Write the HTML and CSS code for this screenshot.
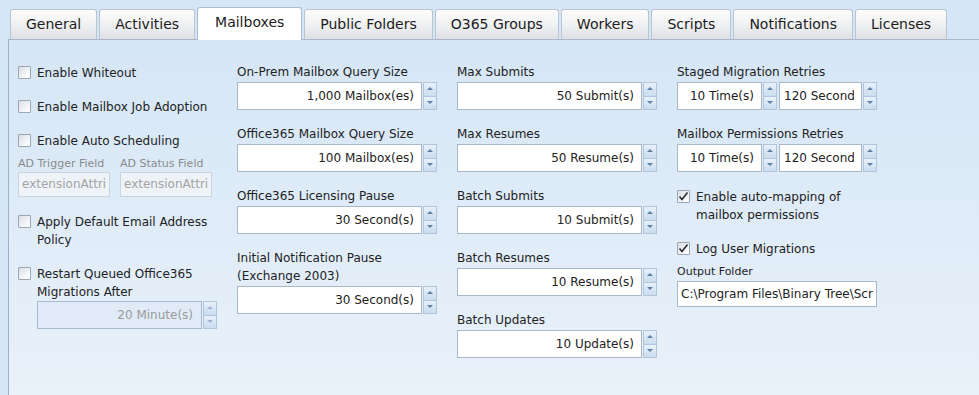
FILE: index.html
```html
<!DOCTYPE html>
<html lang="en">
<head>
  <meta charset="UTF-8">
  <title>Mailboxes Settings</title>
  <link rel="stylesheet" href="styles.css">
</head>
<body>
  <div class="tabs">
    <div class="tab">General</div>
    <div class="tab">Activities</div>
    <div class="tab active">Mailboxes</div>
    <div class="tab">Public Folders</div>
    <div class="tab">O365 Groups</div>
    <div class="tab">Workers</div>
    <div class="tab">Scripts</div>
    <div class="tab">Notifications</div>
    <div class="tab">Licenses</div>
  </div>

  <div class="panel">
    <!-- column 1 -->
    <div class="col">
      <div class="check"><span class="box"></span><div class="check-text">Enable Whiteout</div></div>
      <div class="check"><span class="box"></span><div class="check-text">Enable Mailbox Job Adoption</div></div>
      <div class="check tight"><span class="box"></span><div class="check-text">Enable Auto Scheduling</div></div>
      <div class="ad-fields">
        <div class="ad-field">
          <div class="small-label">AD Trigger Field</div>
          <div class="text-input disabled"><div class="clip">extensionAttribute1</div></div>
        </div>
        <div class="ad-field">
          <div class="small-label">AD Status Field</div>
          <div class="text-input disabled"><div class="clip">extensionAttribute2</div></div>
        </div>
      </div>
      <div class="check"><span class="box"></span><div class="check-text">Apply Default Email Address Policy</div></div>
      <div class="check"><span class="box"></span>
        <div class="check-text">Restart Queued Office365 Migrations After
          <div class="spin disabled">
            <div class="spin-val"><div class="clip">20 Minute(s)</div></div>
            <div class="spin-btns"><span class="up"></span><span class="down"></span></div>
          </div>
        </div>
      </div>
    </div>

    <!-- column 2 -->
    <div class="col">
      <div class="field">
        <div class="label">On-Prem Mailbox Query Size</div>
        <div class="spin"><div class="spin-val"><div class="clip">1,000 Mailbox(es)</div></div><div class="spin-btns"><span class="up"></span><span class="down"></span></div></div>
      </div>
      <div class="field">
        <div class="label">Office365 Mailbox Query Size</div>
        <div class="spin"><div class="spin-val"><div class="clip">100 Mailbox(es)</div></div><div class="spin-btns"><span class="up"></span><span class="down"></span></div></div>
      </div>
      <div class="field">
        <div class="label">Office365 Licensing Pause</div>
        <div class="spin"><div class="spin-val"><div class="clip">30 Second(s)</div></div><div class="spin-btns"><span class="up"></span><span class="down"></span></div></div>
      </div>
      <div class="field">
        <div class="label">Initial Notification Pause (Exchange 2003)</div>
        <div class="spin"><div class="spin-val"><div class="clip">30 Second(s)</div></div><div class="spin-btns"><span class="up"></span><span class="down"></span></div></div>
      </div>
    </div>

    <!-- column 3 -->
    <div class="col">
      <div class="field">
        <div class="label">Max Submits</div>
        <div class="spin"><div class="spin-val"><div class="clip">50 Submit(s)</div></div><div class="spin-btns"><span class="up"></span><span class="down"></span></div></div>
      </div>
      <div class="field">
        <div class="label">Max Resumes</div>
        <div class="spin"><div class="spin-val"><div class="clip">50 Resume(s)</div></div><div class="spin-btns"><span class="up"></span><span class="down"></span></div></div>
      </div>
      <div class="field">
        <div class="label">Batch Submits</div>
        <div class="spin"><div class="spin-val"><div class="clip">10 Submit(s)</div></div><div class="spin-btns"><span class="up"></span><span class="down"></span></div></div>
      </div>
      <div class="field">
        <div class="label">Batch Resumes</div>
        <div class="spin"><div class="spin-val"><div class="clip">10 Resume(s)</div></div><div class="spin-btns"><span class="up"></span><span class="down"></span></div></div>
      </div>
      <div class="field">
        <div class="label">Batch Updates</div>
        <div class="spin"><div class="spin-val"><div class="clip">10 Update(s)</div></div><div class="spin-btns"><span class="up"></span><span class="down"></span></div></div>
      </div>
    </div>

    <!-- column 4 -->
    <div class="col">
      <div class="field">
        <div class="label">Staged Migration Retries</div>
        <div class="spin-pair">
          <div class="spin short"><div class="spin-val"><div class="clip">10 Time(s)</div></div><div class="spin-btns"><span class="up"></span><span class="down"></span></div></div>
          <div class="spin short"><div class="spin-val"><div class="clip">120 Second(s)</div></div><div class="spin-btns"><span class="up"></span><span class="down"></span></div></div>
        </div>
      </div>
      <div class="field gap-more">
        <div class="label">Mailbox Permissions Retries</div>
        <div class="spin-pair">
          <div class="spin short"><div class="spin-val"><div class="clip">10 Time(s)</div></div><div class="spin-btns"><span class="up"></span><span class="down"></span></div></div>
          <div class="spin short"><div class="spin-val"><div class="clip">120 Second(s)</div></div><div class="spin-btns"><span class="up"></span><span class="down"></span></div></div>
        </div>
      </div>
      <div class="check"><span class="box checked"><svg viewBox="0 0 13 13" width="13" height="13"><polyline points="2.5,6.5 5,9.5 10.5,2.5" fill="none" stroke="#2a2a2a" stroke-width="1.6"/></svg></span><div class="check-text">Enable auto-mapping of mailbox permissions</div></div>
      <div class="check tight"><span class="box checked"><svg viewBox="0 0 13 13" width="13" height="13"><polyline points="2.5,6.5 5,9.5 10.5,2.5" fill="none" stroke="#2a2a2a" stroke-width="1.6"/></svg></span><div class="check-text">Log User Migrations</div></div>
      <div class="small-label folder-label">Output Folder</div>
      <div class="text-input folder"><div class="clip">C:\Program Files\Binary Tree\Scripts</div></div>
    </div>
  </div>
</body>
</html>
```

FILE: styles.css
```css
html, body {
  margin: 0;
  height: 395px;
  overflow: hidden;
}

body {
  background: #d5e6f6;
  font-family: 'DejaVu Sans', Verdana, sans-serif;
  font-size: 12px;
  color: #222;
}

.tabs {
  display: flex;
  align-items: flex-end;
  gap: 2px;
  height: 39px;
  padding: 7px 0 0 10px;
  box-sizing: border-box;
}

.tab {
  height: 30px;
  line-height: 29px;
  padding: 0 15px;
  box-sizing: border-box;
  font-size: 14px;
  color: #1c1c1c;
  border: 1px solid #b9c5d1;
  border-bottom: none;
  border-radius: 3px 3px 0 0;
  background: linear-gradient(#fdfdfd, #f1f2f3 45%, #dde0e4);
}

.tab.active {
  position: relative;
  z-index: 1;
  height: 33px;
  line-height: 29px;
  padding: 0 17px;
  margin-bottom: -1px;
  background: #fff;
  border-color: #a9bdd0;
}

.panel {
  margin-left: 8px;
  height: 356px;
  border-top: 1px solid #a9b9ca;
  border-left: 1px solid #9db0c4;
  background: linear-gradient(#d5e6f6, #e9f1fa);
  padding: 23px 0 0 9px;
  box-sizing: border-box;
  display: grid;
  grid-template-columns: 199px 200px 200px 200px;
  column-gap: 20px;
  align-items: start;
}

/* checkboxes */
.check {
  display: flex;
  gap: 6px;
  line-height: 18px;
  margin: 1px 0 16px;
}

.check.tight {
  margin-bottom: 6px;
}

.box {
  flex: none;
  width: 13px;
  height: 13px;
  margin-top: 2px;
  box-sizing: border-box;
  border: 1px solid #9ba6b2;
  border-radius: 1px;
  background: linear-gradient(135deg, #d9dee4, #f7f8fa 70%, #fff);
  position: relative;
}

.box svg {
  position: absolute;
  left: -1px;
  top: -1px;
}

.check-text {
  flex: 1;
}

/* field labels */
.label {
  line-height: 18px;
  margin-bottom: 1px;
}

.field {
  margin-bottom: 15px;
}

.field.gap-more {
  margin-bottom: 16px;
}

.small-label {
  font-size: 11px;
  line-height: 16px;
  color: #8a8a8a;
}

.clip {
  overflow: hidden;
  white-space: nowrap;
}

/* AD fields */
.ad-fields {
  display: flex;
  gap: 10px;
  margin-bottom: 16px;
}

.ad-field {
  width: 92px;
}

.text-input {
  height: 25px;
  line-height: 23px;
  padding: 0 3px;
  box-sizing: border-box;
  border: 1px solid #a9b8c8;
  background: #fff;
}

.text-input.disabled {
  background: #eef3f8;
  border-color: #c9d4df;
  color: #a3a3a3;
}

.folder-label {
  color: #222;
  margin-top: 1px;
}

.text-input.folder {
  height: 26px;
  line-height: 24px;
  width: 200px;
  margin-top: 1px;
}

/* spinners */
.spin {
  display: flex;
  gap: 1px;
  height: 28px;
  width: 200px;
}

.spin-val {
  flex: 1;
  min-width: 0;
  background: #fff;
  border: 1px solid #a9b8c8;
  box-sizing: border-box;
  line-height: 26px;
  padding: 0 7px 0 4px;
  text-align: right;
}

.spin-btns {
  width: 14px;
  display: flex;
  flex-direction: column;
}

.spin-btns span {
  flex: 1;
  position: relative;
  border: 1px solid #b3c5d8;
  background: linear-gradient(#e8f1fa, #c9dcef);
}

.spin-btns span + span {
  border-top: none;
}

.spin-btns span::before {
  content: '';
  position: absolute;
  left: 3px;
  top: 4px;
  border-left: 3px solid transparent;
  border-right: 3px solid transparent;
}

.spin-btns .up::before {
  border-bottom: 3px solid #5d7fa6;
}

.spin-btns .down::before {
  border-top: 3px solid #5d7fa6;
}

.spin.disabled {
  width: 180px;
}

.spin.disabled .spin-val {
  background: #e0ebf7;
  border-color: #a8bbce;
  color: #9a9a9a;
  padding-right: 8px;
}

.spin.disabled .spin-btns span::before {
  opacity: 0.5;
}

.spin-pair {
  display: flex;
  gap: 2px;
}

.spin.short {
  width: 100px;
}

.spin.short + .spin.short {
  width: 98px;
}
```
